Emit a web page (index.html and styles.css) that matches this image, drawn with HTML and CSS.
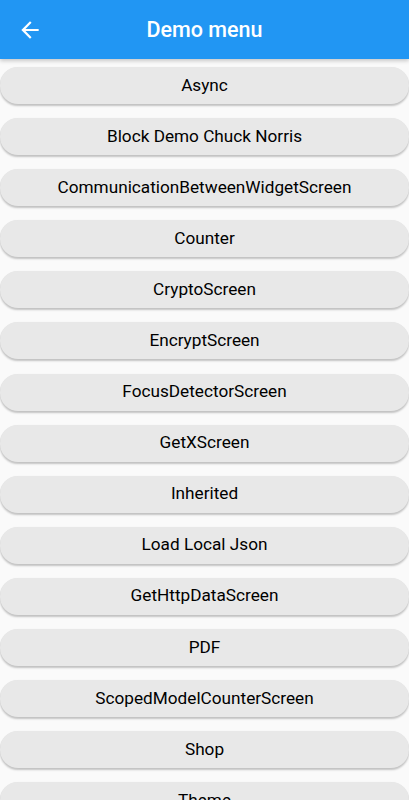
FILE: index.html
```html
<!DOCTYPE html>
<html lang="en">
<head>
    <meta charset="UTF-8">
    <meta name="viewport" content="width=device-width, initial-scale=1.0">
    <title>Demo menu</title>
    <link rel="stylesheet" href="styles.css">
</head>
<body>
    <div class="app-bar">
        <button class="back-button" type="button" aria-label="Back">
            <svg width="26" height="26" viewBox="0 0 24 24">
                <path d="M20 11H7.83l5.59-5.59L12 4l-8 8 8 8 1.41-1.41L7.83 13H20v-2z" fill="#ffffff"/>
            </svg>
        </button>
        <div class="title">Demo menu</div>
    </div>

    <div class="menu">
        <button class="menu-button" type="button">Async</button>
        <button class="menu-button" type="button">Block Demo Chuck Norris</button>
        <button class="menu-button" type="button">CommunicationBetweenWidgetScreen</button>
        <button class="menu-button" type="button">Counter</button>
        <button class="menu-button" type="button">CryptoScreen</button>
        <button class="menu-button" type="button">EncryptScreen</button>
        <button class="menu-button" type="button">FocusDetectorScreen</button>
        <button class="menu-button" type="button">GetXScreen</button>
        <button class="menu-button" type="button">Inherited</button>
        <button class="menu-button" type="button">Load Local Json</button>
        <button class="menu-button" type="button">GetHttpDataScreen</button>
        <button class="menu-button" type="button">PDF</button>
        <button class="menu-button" type="button">ScopedModelCounterScreen</button>
        <button class="menu-button" type="button">Shop</button>
        <button class="menu-button" type="button">Theme</button>
    </div>
</body>
</html>
```

FILE: styles.css
```css
* {
    box-sizing: border-box;
    font-family: Roboto, "Liberation Sans", sans-serif;
    margin: 0;
    padding: 0;
}

html, body {
    height: 100%;
    overflow: hidden;
}

body {
    background-color: #fafafa;
}

.app-bar {
    background-color: #2196f3;
    height: 59px;
    display: flex;
    align-items: center;
    position: relative;
    z-index: 1;
    box-shadow: 0 2px 4px rgba(0, 0, 0, 0.2);
}

.back-button {
    background: none;
    border: none;
    width: 60px;
    height: 59px;
    display: flex;
    align-items: center;
    justify-content: center;
}

.title {
    flex-grow: 1;
    text-align: center;
    color: #ffffff;
    font-size: 21.5px;
    font-weight: 500;
    margin-right: 60px;
}

.menu {
    display: flex;
    flex-direction: column;
    gap: 14.1px;
    padding-top: 8px;
}

.menu-button {
    height: 37px;
    width: 100%;
    border: none;
    border-radius: 18px;
    padding-bottom: 2px;
    background-color: #e8e8e8;
    color: #000000;
    font-size: 17.2px;
    box-shadow: 0 2px 2px rgba(0, 0, 0, 0.22), 0 0 1px rgba(0, 0, 0, 0.08);
    cursor: pointer;
}
```
